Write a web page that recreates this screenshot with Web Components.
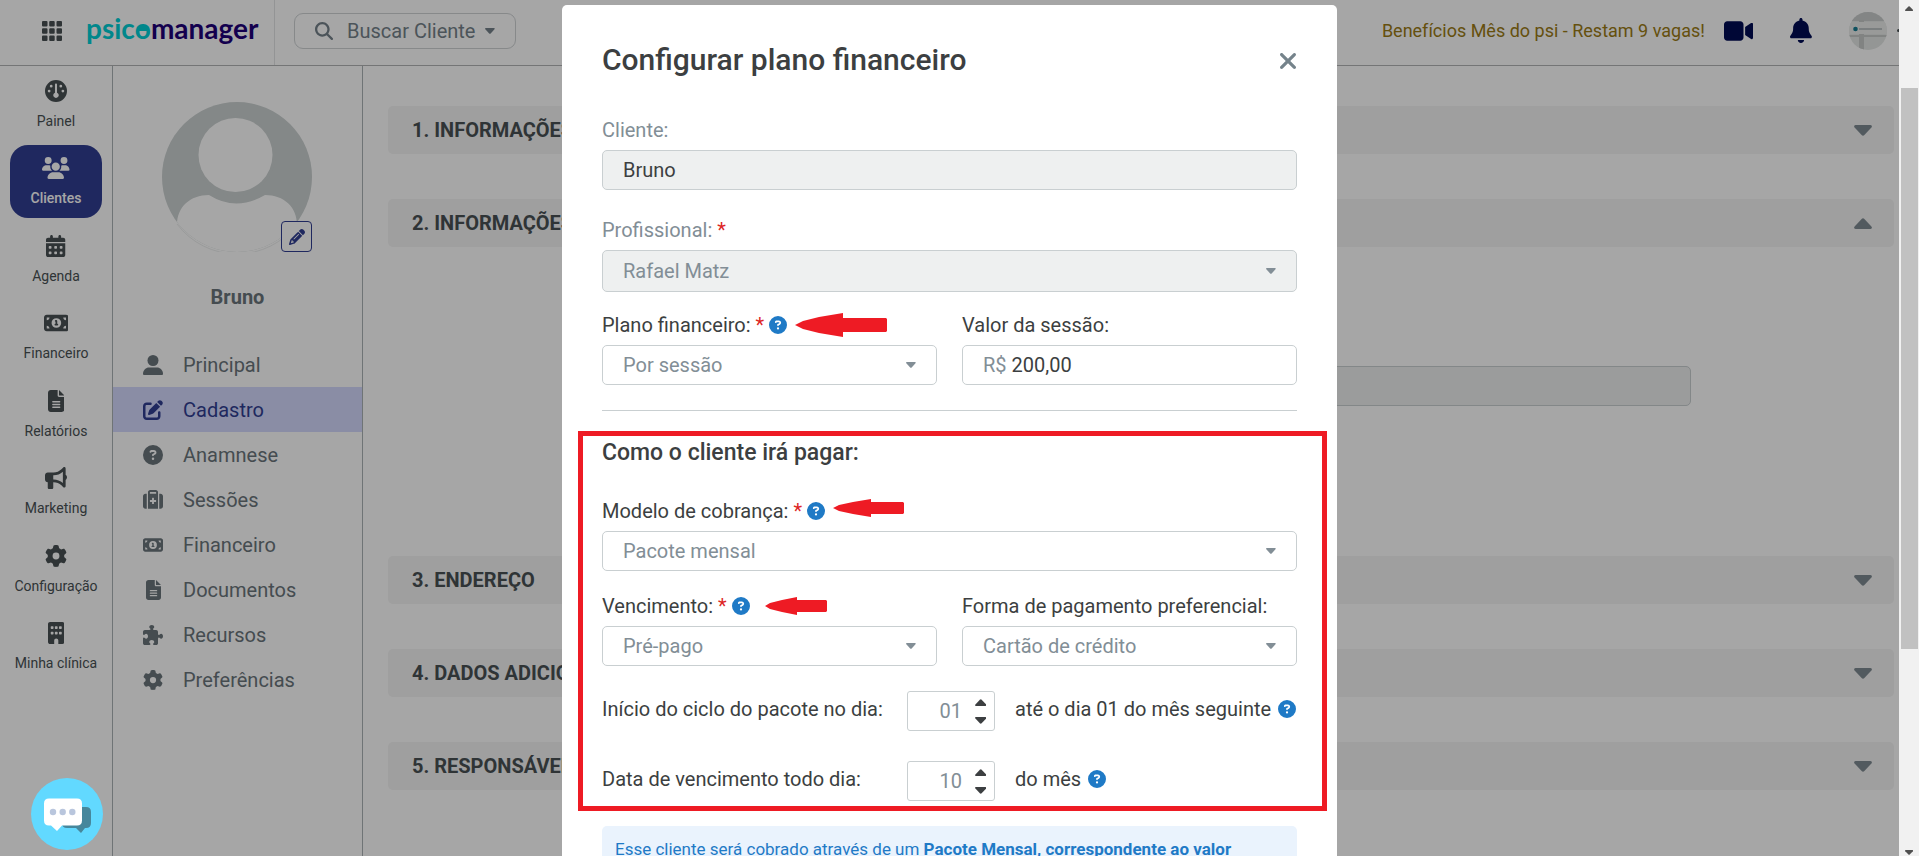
<!DOCTYPE html>
<html lang="pt-BR">
<head>
<meta charset="utf-8">
<meta name="viewport" content="width=device-width, initial-scale=1">
<title>Psicomanager - Cadastro</title>
<style>
    :root {
        --text: #3c3f41;
        --muted: #828e96;
        --menu: #6a757b;
        --dark: #495154;
        --line: #c9cfd1;
        --frame: #abb2b5;
        --primary: #313e92;
        --info: #1f7ac6;
        --danger: #ee1b24;
    }
    body {
        margin: 0;
        height: 100vh;
        overflow: hidden;
        display: flex;
        background: #fff;
        color: var(--text);
        font-family: Roboto, "Liberation Sans", sans-serif;
        font-size: 20px;
        line-height: 30px;
    }
    psi-app { flex: 1; min-width: 0; }
</style>
</head>
<body>
<psi-app>
    <psi-header slot="header"></psi-header>
    <psi-nav slot="nav">
        <psi-nav-item icon="gauge">Painel</psi-nav-item>
        <psi-nav-item icon="users" active>Clientes</psi-nav-item>
        <psi-nav-item icon="calendar">Agenda</psi-nav-item>
        <psi-nav-item icon="money">Financeiro</psi-nav-item>
        <psi-nav-item icon="file">Relatórios</psi-nav-item>
        <psi-nav-item icon="bullhorn">Marketing</psi-nav-item>
        <psi-nav-item icon="gear">Configuração</psi-nav-item>
        <psi-nav-item icon="building">Minha clínica</psi-nav-item>
    </psi-nav>
    <psi-profile slot="profile" name="Bruno">
        <psi-menu-item icon="user">Principal</psi-menu-item>
        <psi-menu-item icon="edit" active>Cadastro</psi-menu-item>
        <psi-menu-item icon="question">Anamnese</psi-menu-item>
        <psi-menu-item icon="suitcase">Sessões</psi-menu-item>
        <psi-menu-item icon="money">Financeiro</psi-menu-item>
        <psi-menu-item icon="file">Documentos</psi-menu-item>
        <psi-menu-item icon="puzzle">Recursos</psi-menu-item>
        <psi-menu-item icon="gear">Preferências</psi-menu-item>
    </psi-profile>
    <psi-panel label="1. INFORMAÇÕES"></psi-panel>
    <psi-panel label="2. INFORMAÇÕES" opened></psi-panel>
    <psi-panel label="3. ENDEREÇO"></psi-panel>
    <psi-panel label="4. DADOS ADICIONAIS"></psi-panel>
    <psi-panel label="5. RESPONSÁVEL"></psi-panel>
</psi-app>
<psi-scrollbar></psi-scrollbar>

<psi-modal label="Configurar plano financeiro">
    <psi-field type="text" label="Cliente:" value="Bruno" disabled></psi-field>
    <psi-field type="select" label="Profissional:" value="Rafael Matz" required disabled tall></psi-field>
    <psi-row>
        <psi-field type="select" label="Plano financeiro:" value="Por sessão" required help>
            <psi-arrow slot="mark" size="large"></psi-arrow>
        </psi-field>
        <psi-field type="text" label="Valor da sessão:" prefix="R$" value="200,00"></psi-field>
    </psi-row>
    <psi-section label="Como o cliente irá pagar:">
        <psi-field type="select" label="Modelo de cobrança:" value="Pacote mensal" required help>
            <psi-arrow slot="mark" size="medium"></psi-arrow>
        </psi-field>
        <psi-row>
            <psi-field type="select" label="Vencimento:" value="Pré-pago" required help>
                <psi-arrow slot="mark" size="small"></psi-arrow>
            </psi-field>
            <psi-field type="select" label="Forma de pagamento preferencial:" value="Cartão de crédito"></psi-field>
        </psi-row>
        <psi-day label="Início do ciclo do pacote no dia:" value="01">até o dia 01 do mês seguinte</psi-day>
        <psi-day label="Data de vencimento todo dia:" value="10">do mês</psi-day>
    </psi-section>
    <psi-notice>Esse cliente será cobrado através de um <b>Pacote Mensal, correspondente ao valor</b></psi-notice>
</psi-modal>
<psi-chat></psi-chat>

<script>
const ICONS = {
    gauge: ['0 0 512 512', '<path d="M256 0a256 256 0 1 0 0 512 256 256 0 1 0 0-512zM232 104c0-13 11-24 24-24s24 11 24 24v190a64 64 0 1 1-48 0zM144 112a32 32 0 1 1 0 64 32 32 0 1 1 0-64zM368 112a32 32 0 1 1 0 64 32 32 0 1 1 0-64zM96 224a32 32 0 1 1 0 64 32 32 0 1 1 0-64zM416 224a32 32 0 1 1 0 64 32 32 0 1 1 0-64z"/>'],
    users: ['0 0 640 512', '<path d="M144 0a80 80 0 1 1 0 160A80 80 0 1 1 144 0zM512 0a80 80 0 1 1 0 160A80 80 0 1 1 512 0zM0 298.7C0 239.8 47.8 192 106.7 192h42.7c15.9 0 31 3.5 44.6 9.7c-1.3 7.2-1.9 14.7-1.9 22.3c0 38.2 16.8 72.5 43.3 96H21.3C9.6 320 0 310.4 0 298.7zM405.3 320c26-23.5 42.6-57.8 42.6-96c0-7.6-.7-15-1.9-22.3c13.6-6.3 28.7-9.7 44.6-9.7h42.7C592.2 192 640 239.8 640 298.7c0 11.8-9.6 21.3-21.3 21.3H405.3zM224 224a96 96 0 1 1 192 0 96 96 0 1 1-192 0zM128 485.3C128 411.7 187.7 352 261.3 352H378.7C452.3 352 512 411.7 512 485.3c0 14.7-11.9 26.7-26.7 26.7H154.7c-14.7 0-26.7-11.9-26.7-26.7z"/>'],
    calendar: ['0 0 448 512', '<path d="M128 0c17.7 0 32 14.3 32 32V64H288V32c0-17.7 14.3-32 32-32s32 14.3 32 32V64h48c26.5 0 48 21.5 48 48v48H0V112C0 85.5 21.5 64 48 64H96V32c0-17.7 14.3-32 32-32zM0 192H448V464c0 26.5-21.5 48-48 48H48c-26.5 0-48-21.5-48-48V192zM64 272v32c0 8.8 7.2 16 16 16h32c8.8 0 16-7.2 16-16V272c0-8.8-7.2-16-16-16H80c-8.8 0-16 7.2-16 16zm128 0v32c0 8.8 7.2 16 16 16h32c8.8 0 16-7.2 16-16V272c0-8.8-7.2-16-16-16H208c-8.8 0-16 7.2-16 16zm144-16c-8.8 0-16 7.2-16 16v32c0 8.8 7.2 16 16 16h32c8.8 0 16-7.2 16-16V272c0-8.8-7.2-16-16-16H336zM64 400v32c0 8.8 7.2 16 16 16h32c8.8 0 16-7.2 16-16V400c0-8.8-7.2-16-16-16H80c-8.8 0-16 7.2-16 16zm144-16c-8.8 0-16 7.2-16 16v32c0 8.8 7.2 16 16 16h32c8.8 0 16-7.2 16-16V400c0-8.8-7.2-16-16-16H208zm112 16v32c0 8.8 7.2 16 16 16h32c8.8 0 16-7.2 16-16V400c0-8.8-7.2-16-16-16H336c-8.8 0-16 7.2-16 16z"/>'],
    money: ['0 0 576 512', '<path d="M64 64C28.7 64 0 92.7 0 128V384c0 35.3 28.7 64 64 64H512c35.3 0 64-28.7 64-64V128c0-35.3-28.7-64-64-64H64zm64 320H64V320c35.3 0 64 28.7 64 64zM64 192V128h64c0 35.3-28.7 64-64 64zM448 384c0-35.3 28.7-64 64-64v64H448zm64-192c-35.3 0-64-28.7-64-64h64v64zM176 256a112 112 0 1 1 224 0 112 112 0 1 1-224 0zm76-48c0 9.7 6.9 17.7 16 19.6V276h-4c-11 0-20 9-20 20s9 20 20 20h48c11 0 20-9 20-20s-9-20-20-20h-4V208c0-11-9-20-20-20H272c-11 0-20 9-20 20z"/>'],
    file: ['0 0 384 512', '<path d="M64 0C28.7 0 0 28.7 0 64V448c0 35.3 28.7 64 64 64H320c35.3 0 64-28.7 64-64V160H256c-17.7 0-32-14.3-32-32V0H64zM256 0V128H384L256 0zM112 256H272c8.8 0 16 7.2 16 16s-7.2 16-16 16H112c-8.8 0-16-7.2-16-16s7.2-16 16-16zm0 64H272c8.8 0 16 7.2 16 16s-7.2 16-16 16H112c-8.8 0-16-7.2-16-16s7.2-16 16-16zm0 64H272c8.8 0 16 7.2 16 16s-7.2 16-16 16H112c-8.8 0-16-7.2-16-16s7.2-16 16-16z"/>'],
    bullhorn: ['0 0 512 512', '<path d="M480 32c0-12.9-7.8-24.6-19.8-29.6s-25.7-2.2-34.9 6.9L381.7 53c-48 48-113.1 75-181 75H64c-35.3 0-64 28.7-64 64v96c0 35.3 28.7 64 64 64v128c0 17.7 14.3 32 32 32h64c17.7 0 32-14.3 32-32V352h8.7c67.9 0 133 27 181 75l43.6 43.6c9.2 9.2 22.9 11.9 34.9 6.9s19.8-16.6 19.8-29.6V300.4c18.6-8.8 32-32.5 32-60.4s-13.4-51.6-32-60.4V32zM416 108.7V371.3C357.2 317.8 280.5 288 200.7 288H192V192h8.7c79.8 0 156.5-29.8 215.3-83.3z"/>'],
    gear: ['0 0 512 512', '<path d="M495.9 166.6c3.2 8.7 .5 18.4-6.4 24.6l-43.3 39.4c1.1 8.3 1.7 16.8 1.7 25.4s-.6 17.1-1.7 25.4l43.3 39.4c6.9 6.2 9.6 15.9 6.4 24.6c-4.4 11.9-9.7 23.3-15.8 34.3l-4.7 8.1c-6.6 11-14 21.4-22.1 31.2c-5.9 7.2-15.7 9.6-24.5 6.8l-55.7-17.7c-13.4 10.3-28.2 18.9-44 25.4l-12.5 57.1c-2 9.1-9 16.3-18.2 17.8c-13.8 2.3-28 3.5-42.5 3.5s-28.7-1.2-42.5-3.5c-9.2-1.5-16.2-8.7-18.2-17.8l-12.5-57.1c-15.8-6.5-30.6-15.1-44-25.4L83.1 425.9c-8.8 2.8-18.6 .3-24.5-6.8c-8.1-9.8-15.5-20.2-22.1-31.2l-4.7-8.1c-6.1-11-11.4-22.4-15.8-34.3c-3.2-8.7-.5-18.4 6.4-24.6l43.3-39.4C64.6 273.1 64 264.6 64 256s.6-17.1 1.7-25.4L22.4 191.2c-6.9-6.2-9.6-15.9-6.4-24.6c4.4-11.9 9.7-23.3 15.8-34.3l4.7-8.1c6.6-11 14-21.4 22.1-31.2c5.9-7.2 15.7-9.6 24.5-6.8l55.7 17.7c13.4-10.3 28.2-18.9 44-25.4l12.5-57.1c2-9.1 9-16.3 18.2-17.8C227.3 1.2 241.5 0 256 0s28.7 1.2 42.5 3.5c9.2 1.5 16.2 8.7 18.2 17.8l12.5 57.1c15.8 6.5 30.6 15.1 44 25.4l55.7-17.7c8.8-2.8 18.6-.3 24.5 6.8c8.1 9.8 15.5 20.2 22.1 31.2l4.7 8.1c6.1 11 11.4 22.4 15.8 34.3zM256 336a80 80 0 1 0 0-160 80 80 0 1 0 0 160z"/>'],
    building: ['0 0 384 512', '<path d="M48 0h288c26 0 48 22 48 48v416c0 26-22 48-48 48h-96v-80c0-26-22-48-48-48s-48 22-48 48v80H48c-26 0-48-22-48-48V48C0 22 22 0 48 0zM80 96h32q16 0 16 16v32q0 16-16 16H80q-16 0-16-16v-32q0-16 16-16zM176 96h32q16 0 16 16v32q0 16-16 16h-32q-16 0-16-16v-32q0-16 16-16zM272 96h32q16 0 16 16v32q0 16-16 16h-32q-16 0-16-16v-32q0-16 16-16zM80 224h32q16 0 16 16v32q0 16-16 16H80q-16 0-16-16v-32q0-16 16-16zM176 224h32q16 0 16 16v32q0 16-16 16h-32q-16 0-16-16v-32q0-16 16-16zM272 224h32q16 0 16 16v32q0 16-16 16h-32q-16 0-16-16v-32q0-16 16-16z"/>'],
    user: ['0 0 20 20', '<circle cx="10" cy="5.5" r="5.5"/><path d="M0 19c0-4 3-6.5 6-6.5h8c3 0 6 2.5 6 6.5q0 1-1 1H1q-1 0-1-1z"/>'],
    edit: ['0 0 512 512', '<path d="M471.6 21.7c-21.9-21.9-57.3-21.9-79.2 0L362.3 51.7l97.9 97.9 30.1-30.1c21.9-21.9 21.9-57.3 0-79.2L471.6 21.7zm-299.2 220c-6.1 6.1-10.8 13.6-13.5 21.9l-29.6 88.8c-2.9 8.6-.6 18.1 5.8 24.6s15.9 8.7 24.6 5.8l88.8-29.6c8.2-2.7 15.7-7.4 21.9-13.5L437.7 172.3 339.7 74.3 172.4 241.7zM96 64C43 64 0 107 0 160V416c0 53 43 96 96 96H352c53 0 96-43 96-96V320c0-17.7-14.3-32-32-32s-32 14.3-32 32v96c0 17.7-14.3 32-32 32H96c-17.7 0-32-14.3-32-32V160c0-17.7 14.3-32 32-32h96c17.7 0 32-14.3 32-32s-14.3-32-32-32H96z"/>'],
    question: ['0 0 512 512', '<path d="M256 512A256 256 0 1 0 256 0a256 256 0 1 0 0 512zM169.8 165.3c7.9-22.3 29.1-37.3 52.8-37.3h58.3c34.9 0 63.1 28.3 63.1 63.1c0 22.6-12.1 43.5-31.7 54.8L280 264.4c-.2 13-10.9 23.6-24 23.6c-13.3 0-24-10.7-24-24V250.5c0-8.6 4.6-16.5 12.1-20.8l44.3-25.4c4.7-2.7 7.6-7.7 7.6-13.1c0-8.4-6.8-15.1-15.1-15.1H222.6c-3.4 0-6.4 2.1-7.5 5.3l-.4 1.2c-4.4 12.5-18.2 19-30.6 14.6s-19-18.2-14.6-30.6l.3-1.3zM224 352a32 32 0 1 1 64 0 32 32 0 1 1-64 0z"/>'],
    suitcase: ['0 0 512 512', '<path d="M184 0h144c31 0 56 25 56 56v424H128V56c0-31 25-56 56-56zM184 48q-8 0-8 8v40h160V56q0-8-8-8zM232 208v48h-48q-8 0-8 8v32q0 8 8 8h48v48q0 8 8 8h32q8 0 8-8v-48h48q8 0 8-8v-32q0-8-8-8h-48v-48q0-8-8-8h-32q-8 0-8 8zM64 96h32v384H64c-35 0-64-29-64-64V160c0-35 29-64 64-64zM416 96h32c35 0 64 29 64 64v256c0 35-29 64-64 64h-32z"/>'],
    puzzle: ['0 0 512 512', '<path d="M192 104.8c0-9.2-5.8-17.3-13.2-22.8C167.2 73.3 160 61.3 160 48c0-26.5 28.7-48 64-48s64 21.5 64 48c0 13.3-7.2 25.3-18.8 34c-7.4 5.5-13.2 13.6-13.2 22.8c0 12.8 10.4 23.2 23.2 23.2H336c26.5 0 48 21.5 48 48v56.8c0 12.8 10.4 23.2 23.2 23.2c9.2 0 17.3-5.8 22.8-13.2c8.7-11.6 20.7-18.8 34-18.8c26.5 0 48 28.7 48 64s-21.5 64-48 64c-13.3 0-25.3-7.2-34-18.8c-5.5-7.4-13.6-13.2-22.8-13.2c-12.8 0-23.2 10.4-23.2 23.2V464c0 26.5-21.5 48-48 48H279.2c-12.8 0-23.2-10.4-23.2-23.2c0-9.2 5.8-17.3 13.2-22.8c11.6-8.7 18.8-20.7 18.8-34c0-26.5-28.7-48-64-48s-64 21.5-64 48c0 13.3 7.2 25.3 18.8 34c7.4 5.5 13.2 13.6 13.2 22.8c0 12.8-10.4 23.2-23.2 23.2H48c-26.5 0-48-21.5-48-48V343.2C0 330.4 10.4 320 23.2 320c9.2 0 17.3 5.8 22.8 13.2C54.7 344.8 66.7 352 80 352c26.5 0 48-28.7 48-64s-21.5-64-48-64c-13.3 0-25.3 7.2-34 18.8C40.5 250.2 32.4 256 23.2 256C10.4 256 0 245.6 0 232.8V176c0-26.5 21.5-48 48-48H168.8c12.8 0 23.2-10.4 23.2-23.2z"/>'],
    pencil: ['0 0 512 512', '<path d="M410.3 231l11.3-11.3-33.9-33.9-62.1-62.1L291.7 89.8l-11.3 11.3-22.6 22.6L58.6 322.9c-10.4 10.4-18 23.3-22.2 37.4L1 480.7c-2.5 8.4-.2 17.5 6.1 23.7s15.3 8.5 23.7 6.1l120.3-35.4c14.1-4.2 27-11.8 37.4-22.2L387.7 253.7 410.3 231zM160 399.4l-9.1 22.7c-4 3.1-8.5 5.4-13.3 6.9L59.4 452l23-78.1c1.4-4.9 3.8-9.4 6.9-13.3l22.7-9.1v32c0 8.8 7.2 16 16 16h32zM362.7 18.7L314.3 67.1l129.9 129.9 48.4-48.4c25-25 25-65.5 0-90.5L453.3 18.7c-25-25-65.5-25-90.6 0zM315.3 186.7l-144 144c-6.2 6.2-16.4 6.2-22.6 0s-6.2-16.4 0-22.6l144-144c6.2-6.2 16.4-6.2 22.6 0s6.2 16.4 0 22.6z"/>'],
    search: ['0 0 512 512', '<path d="M416 208c0 45.9-14.9 88.3-40 122.7L502.6 457.4c12.5 12.5 12.5 32.8 0 45.3s-32.8 12.5-45.3 0L330.7 376c-34.4 25.2-76.8 40-122.7 40C93.1 416 0 322.9 0 208S93.1 0 208 0S416 93.1 416 208zM208 352a144 144 0 1 0 0-288 144 144 0 1 0 0 288z"/>'],
    bell: ['0 0 448 512', '<path d="M224 0c-17.7 0-32 14.3-32 32V51.2C119 66 64 130.6 64 208v18.8c0 47-17.3 92.4-48.5 127.6l-7.4 8.3c-8.4 9.4-10.4 22.9-5.3 34.4S19.4 416 32 416H416c12.6 0 24-7.4 29.2-18.9s3.1-25-5.3-34.4l-7.4-8.3C401.3 319.2 384 273.9 384 226.8V208c0-77.4-55-142-128-156.8V32c0-17.7-14.3-32-32-32zm45.3 493.3c12-12 18.7-28.3 18.7-45.3H160c0 17 6.7 33.3 18.7 45.3s28.3 18.7 45.3 18.7s33.3-6.7 45.3-18.7z"/>'],
    video: ['0 0 576 512', '<path d="M0 128C0 92.7 28.7 64 64 64H320c35.3 0 64 28.7 64 64V384c0 35.3-28.7 64-64 64H64c-35.3 0-64-28.7-64-64V128zM559.1 99.8c10.4 5.6 16.9 16.4 16.9 28.2V384c0 11.8-6.5 22.6-16.9 28.2s-23 5-32.9-1.6l-96-64L416 337.1V174.9l14.2-9.5 96-64c9.8-6.5 22.4-7.2 32.9-1.6z"/>'],
    close: ['32 96 320 320', '<path d="M342.6 150.6c12.5-12.5 12.5-32.8 0-45.3s-32.8-12.5-45.3 0L192 210.7 86.6 105.4c-12.5-12.5-32.8-12.5-45.3 0s-12.5 32.8 0 45.3L146.7 256 41.4 361.4c-12.5 12.5-12.5 32.8 0 45.3s32.8 12.5 45.3 0L192 301.3 297.4 406.6c12.5 12.5 32.8 12.5 45.3 0s12.5-32.8 0-45.3L237.3 256 342.6 150.6z"/>'],
    grid: ['0 0 20 20', '<path d="M1 0h3.5q1 0 1 1v3.5q0 1-1 1H1q-1 0-1-1V1q0-1 1-1zM8.2 0h3.5q1 0 1 1v3.5q0 1-1 1H8.2q-1 0-1-1V1q0-1 1-1zM15.5 0H19q1 0 1 1v3.5q0 1-1 1h-3.5q-1 0-1-1V1q0-1 1-1zM1 7.2h3.5q1 0 1 1v3.5q0 1-1 1H1q-1 0-1-1V8.2q0-1 1-1zM8.2 7.2h3.5q1 0 1 1v3.5q0 1-1 1H8.2q-1 0-1-1V8.2q0-1 1-1zM15.5 7.2H19q1 0 1 1v3.5q0 1-1 1h-3.5q-1 0-1-1V8.2q0-1 1-1zM1 14.5h3.5q1 0 1 1V19q0 1-1 1H1q-1 0-1-1v-3.5q0-1 1-1zM8.2 14.5h3.5q1 0 1 1V19q0 1-1 1H8.2q-1 0-1-1v-3.5q0-1 1-1zM15.5 14.5H19q1 0 1 1V19q0 1-1 1h-3.5q-1 0-1-1v-3.5q0-1 1-1z"/>'],
    down: ['0 0 18 11', '<path d="M1.5 0h15q2.3.4.9 2.5l-7 7.5q-1.4 1.4-2.8 0l-7-7.5Q-.8.4 1.5 0z"/>'],
    up: ['0 0 18 11', '<path d="M1.5 11h15q2.3-.4.9-2.5l-7-7.5q-1.4-1.4-2.8 0l-7 7.5Q-.8 10.6 1.5 11z"/>']
};

class PsiElement extends HTMLElement {
    constructor() {
        super();
        this.attachShadow({mode: 'open'});
    }

    connectedCallback() {
        this.shadowRoot.innerHTML = this.render();
    }

    attr(name) {
        return this.getAttribute(name) || '';
    }
}

class PsiIcon extends PsiElement {
    render() {
        const [box, shape] = ICONS[this.attr('name')];
        return `
            <style>
                :host { display: inline-flex; align-items: center; justify-content: center; flex: none; }
                svg { display: block; height: 1em; max-width: 100%; fill: currentColor; fill-rule: evenodd; }
            </style>
            <svg viewBox="${box}" aria-hidden="true">${shape}</svg>
        `;
    }
}

class PsiApp extends PsiElement {
    render() {
        return `
            <style>
                :host { display: flex; flex-direction: column; height: 100%; overflow: hidden; }
                .body { flex: 1; display: flex; min-height: 0; }
                main {
                    flex: 1;
                    min-width: 0;
                    display: flex;
                    flex-direction: column;
                    gap: 45px;
                    padding: 40px 5px 0 25px;
                }
            </style>
            <slot name="header"></slot>
            <div class="body">
                <slot name="nav"></slot>
                <slot name="profile"></slot>
                <main><slot></slot></main>
            </div>
        `;
    }
}

class PsiHeader extends PsiElement {
    render() {
        return `
            <style>
                :host {
                    display: flex;
                    align-items: stretch;
                    flex: none;
                    height: 65px;
                    border-bottom: 1px solid #b2b4b6;
                }
                button { background: none; border: 0; padding: 0; font: inherit; color: inherit; cursor: pointer; display: flex; align-items: center; }
                .brand {
                    box-sizing: border-box;
                    width: 275px;
                    padding: 0 0 4px 42px;
                    display: flex;
                    align-items: center;
                    gap: 24px;
                    border-right: 1px solid #e2e4e5;
                }
                .apps { font-size: 20px; color: var(--dark); }
                .logo {
                    display: flex;
                    font: 700 28px/36px Lato, sans-serif;
                    color: #1e0079;
                    text-decoration: none;
                    padding-bottom: 6px;
                }
                .logo .teal { color: #00cfd6; }
                .logo span span { position: relative; display: inline-block; }
                .logo span span::after {
                    content: "";
                    position: absolute;
                    inset: 15px 3px auto 3px;
                    height: 6px;
                    border-radius: 6px 6px 0 0;
                    background: currentColor;
                }
                .search {
                    align-self: center;
                    margin: 0 0 4px 19px;
                    height: 36px;
                    padding: 0 20px;
                    border: 1px solid #cfd3d5;
                    border-radius: 9px;
                    color: #75828a;
                }
                .search psi-icon:first-child { font-size: 18px; margin-right: 14px; }
                .search psi-icon:last-child { font-size: 6px; margin-left: 10px; }
                .tools {
                    margin-left: auto;
                    padding-bottom: 4px;
                    display: flex;
                    align-items: center;
                    color: #000c54;
                    overflow: hidden;
                }
                .tools a { font-size: 18px; color: #9b7b14; text-decoration: none; margin-right: 19px; }
                .video { font-size: 26px; margin-right: 37px; }
                .bell { font-size: 25px; margin-right: 37px; }
                .avatar svg { display: block; }
                .avatar { gap: 10px; }
                .avatar i { width: 2px; height: 3px; border-radius: 2px 0 0 2px; background: var(--dark); }
            </style>
            <div class="brand">
                <button class="apps" aria-label="Aplicativos"><psi-icon name="grid"></psi-icon></button>
                <a class="logo" href="#"><span class="teal">psic<span>o</span></span>manager</a>
            </div>
            <button class="search"><psi-icon name="search"></psi-icon>Buscar Cliente<psi-icon name="down"></psi-icon></button>
            <div class="tools">
                <a href="#">Benefícios Mês do psi - Restam 9 vagas!</a>
                <button class="video" aria-label="Vídeo"><psi-icon name="video"></psi-icon></button>
                <button class="bell" aria-label="Notificações"><psi-icon name="bell"></psi-icon></button>
                <button class="avatar" aria-label="Conta">
                    <svg width="38" height="38" viewBox="0 0 38 38">
                        <clipPath id="round"><circle cx="19" cy="19" r="19"/></clipPath>
                        <g clip-path="url(#round)">
                            <path fill="#e4e7e5" d="M0 0h38v38H0z"/>
                            <path fill="#c9cccc" d="M0 0h38v9H0z"/>
                            <path fill="#c6c9c8" d="M10 8h5v30h-5zM0 23h38v2H0z"/>
                            <path fill="#ebedec" d="M0 10h38v12H0z"/>
                            <path fill="#bcc2c3" d="M10 16h23v2H10z"/>
                            <circle cx="6.5" cy="17" r="2.3" fill="#187d92"/>
                        </g>
                    </svg>
                    <i></i>
                </button>
            </div>
        `;
    }
}

class PsiNav extends PsiElement {
    render() {
        return `
            <style>
                :host { display: block; flex: none; width: 112px; border-right: 1px solid var(--frame); }
                nav {
                    display: grid;
                    align-content: space-between;
                    min-height: 615px;
                    padding: 2px 10px 0;
                }
            </style>
            <nav><slot></slot></nav>
        `;
    }
}

class PsiNavItem extends PsiElement {
    render() {
        return `
            <style>
                :host { display: block; }
                a {
                    display: flex;
                    flex-direction: column;
                    align-items: center;
                    gap: 9px;
                    padding: 12px 0 10px;
                    border-radius: 18px;
                    color: var(--dark);
                    font-size: 14px;
                    line-height: 20px;
                    white-space: nowrap;
                    text-decoration: none;
                }
                psi-icon { font-size: 22px; }
                :host([active]) a { background: var(--primary); color: #fff; font-weight: 500; }
            </style>
            <a href="#"><psi-icon name="${this.attr('icon')}"></psi-icon><slot></slot></a>
        `;
    }
}

class PsiProfile extends PsiElement {
    render() {
        return `
            <style>
                :host { display: block; flex: none; width: 249px; border-right: 1px solid var(--frame); color: var(--menu); }
                .photo { position: relative; width: 150px; margin: 36px auto 30px 49px; }
                svg { display: block; }
                button {
                    position: absolute;
                    right: 0;
                    bottom: 0;
                    width: 31px;
                    height: 31px;
                    padding: 0;
                    display: grid;
                    place-items: center;
                    border: 1px solid var(--primary);
                    border-radius: 4px;
                    background: #fff;
                    color: var(--primary);
                    font-size: 16px;
                }
                h2 { margin: 0 0 30px; font-size: 20px; line-height: 30px; font-weight: 700; text-align: center; }
            </style>
            <div class="photo">
                <svg width="150" height="150" viewBox="0 0 150 150">
                    <clipPath id="disc"><circle cx="75" cy="75" r="75"/></clipPath>
                    <g clip-path="url(#disc)">
                        <path fill="#cbd1d1" d="M0 0h150v150H0z"/>
                        <path fill="#fff" d="M15 150v-27c0-18 13-30 32-30q27 17 56 0c19 0 32 12 32 30v27z"/>
                        <circle cx="73.5" cy="54" r="40" fill="#cbd1d1"/>
                        <circle cx="73.5" cy="53" r="37" fill="#fff"/>
                    </g>
                    <path d="M15 122a75 75 0 0 0 120 0" fill="none" stroke="#eceeee"/>
                </svg>
                <button aria-label="Editar foto"><psi-icon name="pencil"></psi-icon></button>
            </div>
            <h2>${this.attr('name')}</h2>
            <nav><slot></slot></nav>
        `;
    }
}

class PsiMenuItem extends PsiElement {
    render() {
        return `
            <style>
                :host { display: block; }
                a {
                    display: flex;
                    align-items: center;
                    gap: 20px;
                    height: 45px;
                    padding-left: 30px;
                    color: inherit;
                    text-decoration: none;
                }
                psi-icon { width: 20px; }
                :host([active]) a { background: #d4d9fe; color: var(--primary); }
            </style>
            <a href="#"><psi-icon name="${this.attr('icon')}"></psi-icon><slot></slot></a>
        `;
    }
}

class PsiPanel extends PsiElement {
    render() {
        const opened = this.hasAttribute('opened');
        return `
            <style>
                :host { display: block; }
                button {
                    width: 100%;
                    display: flex;
                    align-items: center;
                    justify-content: space-between;
                    height: 48px;
                    padding: 0 22px 0 24px;
                    border: 0;
                    border-radius: 5px;
                    background: #f4f4f4;
                    color: var(--dark);
                    font: inherit;
                    font-weight: 700;
                }
                psi-icon { font-size: 11px; color: #7f8b92; }
                .content { padding: 119px 203px 105px 0; }
                input {
                    display: block;
                    box-sizing: border-box;
                    width: 70%;
                    margin-left: auto;
                    height: 40px;
                    border: 1px solid var(--line);
                    border-radius: 5px;
                    background: #eef0f0;
                }
            </style>
            <button aria-expanded="${opened}">${this.attr('label')}<psi-icon name="${opened ? 'up' : 'down'}"></psi-icon></button>
            ${opened ? '<div class="content"><input disabled aria-label="Plano"></div>' : ''}
        `;
    }
}

class PsiScrollbar extends PsiElement {
    render() {
        return `
            <style>
                :host {
                    display: flex;
                    flex-direction: column;
                    align-items: center;
                    width: 20px;
                    background: #f1f1f1;
                    color: #505050;
                    font-size: 5px;
                }
                psi-icon { height: 17px; }
                psi-icon:last-child { height: 7px; }
                .track { flex: 1; align-self: stretch; padding: 0 1px 0 2px; display: grid; grid-template-rows: 71fr 561fr 200fr; }
                .thumb { grid-row: 2; background: #c1c1c1; }
            </style>
            <psi-icon name="up"></psi-icon>
            <div class="track"><div class="thumb"></div></div>
            <psi-icon name="down"></psi-icon>
        `;
    }
}

class PsiModal extends PsiElement {
    render() {
        return `
            <style>
                :host {
                    position: fixed;
                    inset: 0 20px 0 0;
                    display: flex;
                    justify-content: center;
                    align-items: flex-start;
                    padding-top: 5px;
                    background: rgba(0, 0, 0, 0.35);
                    overflow: hidden;
                }
                .dialog {
                    box-sizing: border-box;
                    width: min(775px, 100%);
                    padding: 35px 40px;
                    border-radius: 5px;
                    background: #fff;
                }
                header { display: flex; align-items: center; justify-content: space-between; margin-bottom: 35px; }
                h1 { margin: 0; font-size: 30px; line-height: 40px; font-weight: 500; }
                button { display: flex; padding: 2px 1px 0; border: 0; background: none; color: #75838b; font-size: 16px; cursor: pointer; }
                .form { display: flex; flex-direction: column; gap: 25px; }
            </style>
            <div class="dialog" role="dialog" aria-label="${this.attr('label')}">
                <header>
                    <h1>${this.attr('label')}</h1>
                    <button aria-label="Fechar"><psi-icon name="close"></psi-icon></button>
                </header>
                <div class="form"><slot></slot></div>
            </div>
        `;
    }

    connectedCallback() {
        super.connectedCallback();
        this.shadowRoot.querySelector('button').addEventListener('click', () => this.remove());
    }
}

class PsiRow extends PsiElement {
    render() {
        return `
            <style>
                :host { display: grid; grid-template-columns: 1fr 1fr; gap: 25px; }
            </style>
            <slot></slot>
        `;
    }
}

class PsiField extends PsiElement {
    render() {
        const value = this.attr('value');
        const disabled = this.hasAttribute('disabled') ? 'disabled' : '';
        const prefix = this.attr('prefix');
        const control = this.attr('type') === 'select'
            ? `<select id="control" ${disabled}><option>${value}</option></select><psi-icon name="down"></psi-icon>`
            : `${prefix ? `<span>${prefix}</span>` : ''}<input id="control" value="${value}" ${disabled}>`;
        return `
            <style>
                :host { display: block; min-width: 0; }
                :host([tall]) { margin-bottom: -7px; }
                .head { display: flex; align-items: center; gap: 5px; height: 30px; margin-bottom: 5px; white-space: nowrap; }
                :host([disabled]) label { color: var(--muted); }
                em { color: #dd2626; font-style: normal; }
                .help { font-size: 18px; color: var(--info); }
                .box {
                    position: relative;
                    box-sizing: border-box;
                    display: flex;
                    align-items: center;
                    gap: 5px;
                    height: 40px;
                    padding: 0 20px;
                    border: 1px solid var(--line);
                    border-radius: 5px;
                    background: #fff;
                    color: var(--muted);
                }
                :host([tall]) .box { height: 42px; }
                :host([disabled]) .box { background: #eef0f0; }
                input, select {
                    flex: 1;
                    min-width: 0;
                    height: 100%;
                    padding: 0;
                    border: 0;
                    outline: 0;
                    background: none;
                    font: inherit;
                    appearance: none;
                    opacity: 1;
                }
                input { color: var(--text); }
                select { color: var(--muted); }
                .box psi-icon { font-size: 6px; }
            </style>
            <div class="head">
                <label for="control">${this.attr('label')}</label>
                ${this.hasAttribute('required') ? '<em>*</em>' : ''}
                ${this.hasAttribute('help') ? '<psi-icon class="help" name="question"></psi-icon>' : ''}
                <slot name="mark"></slot>
            </div>
            <div class="box">${control}</div>
        `;
    }
}

class PsiSection extends PsiElement {
    render() {
        return `
            <style>
                :host { display: block; border-top: 1px solid var(--line); padding-top: 27px; }
                section { position: relative; display: flex; flex-direction: column; gap: 20px; }
                h2 { margin: 0 0 8px; font-size: 23px; line-height: 30px; font-weight: 500; }
                .outline {
                    position: absolute;
                    inset: -7px -30px -10px -24px;
                    border: 5px solid var(--danger);
                    pointer-events: none;
                }
            </style>
            <section>
                <h2>${this.attr('label')}</h2>
                <slot></slot>
                <div class="outline"></div>
            </section>
        `;
    }
}

class PsiDay extends PsiElement {
    render() {
        return `
            <style>
                :host { display: flex; align-items: center; gap: 20px; height: 40px; margin: 5px 0; }
                :host(:last-child) { margin-bottom: 0; }
                label { width: 285px; padding-bottom: 4px; white-space: nowrap; }
                .box {
                    box-sizing: border-box;
                    display: flex;
                    width: 88px;
                    height: 40px;
                    padding: 0 10px 0 20px;
                    border: 1px solid var(--line);
                    border-radius: 3px;
                }
                input {
                    width: 34px;
                    padding: 0;
                    margin-right: 13px;
                    border: 0;
                    outline: 0;
                    background: none;
                    color: var(--muted);
                    font: inherit;
                    text-align: right;
                    appearance: textfield;
                }
                input::-webkit-inner-spin-button { appearance: none; margin: 0; }
                .spin { display: flex; flex-direction: column; justify-content: center; gap: 11px; }
                button { display: flex; padding: 0; border: 0; background: none; color: var(--text); font-size: 7px; }
                .after { display: flex; align-items: center; gap: 7px; padding-bottom: 4px; white-space: nowrap; }
                .after psi-icon { font-size: 18px; color: var(--info); }
            </style>
            <label for="day">${this.attr('label')}</label>
            <div class="box">
                <input id="day" type="number" min="1" max="31" value="${this.attr('value')}">
                <div class="spin">
                    <button aria-label="Aumentar"><psi-icon name="up"></psi-icon></button>
                    <button aria-label="Diminuir"><psi-icon name="down"></psi-icon></button>
                </div>
            </div>
            <div class="after"><span><slot></slot></span><psi-icon name="question"></psi-icon></div>
        `;
    }

    connectedCallback() {
        super.connectedCallback();
        const input = this.shadowRoot.querySelector('input');
        const [up, down] = this.shadowRoot.querySelectorAll('button');
        const step = (delta) => {
            const day = Math.min(31, Math.max(1, Number(input.value) + delta));
            input.value = String(day).padStart(2, '0');
        };
        up.addEventListener('click', () => step(1));
        down.addEventListener('click', () => step(-1));
    }
}

// Red pointer drawn after a field label
class PsiArrow extends PsiElement {
    render() {
        const shapes = {
            large: [92, 24, 'M0 12L8 8l16-4L48 0v5h43l1 1v12l-1 1H48v5l-24-4-16-4z'],
            medium: [71, 18, 'M0 9l6-3 14-3L38 0v3h32l1 1v10l-1 1H38v3l-18-3-14-3z'],
            small: [62, 18, 'M0 9l5-3 12-3L32 0v3h29l1 1v10l-1 1H32v3l-15-3-12-3z']
        };
        const [w, h, d] = shapes[this.attr('size')];
        return `
            <style>
                :host { display: block; margin-left: 3px; }
                :host([size="medium"]) { margin-bottom: 6px; }
                :host([size="small"]) { margin-left: 10px; }
                svg { display: block; fill: var(--danger); }
            </style>
            <svg width="${w}" height="${h}" viewBox="0 0 ${w} ${h}" aria-hidden="true"><path d="${d}"/></svg>
        `;
    }
}

class PsiNotice extends PsiElement {
    render() {
        return `
            <style>
                :host {
                    display: block;
                    padding: 8px 13px;
                    border-radius: 5px;
                    background: #eaf3fd;
                    color: var(--info);
                    font-size: 17px;
                    line-height: 30px;
                }
            </style>
            <slot></slot>
        `;
    }
}

class PsiChat extends PsiElement {
    render() {
        return `
            <style>
                :host { position: fixed; left: 31px; bottom: 6px; }
                button { display: block; padding: 0; border: 0; border-radius: 50%; background: #62d9ff; cursor: pointer; }
                svg { display: block; }
            </style>
            <button aria-label="Abrir chat">
                <svg width="72" height="72" viewBox="0 0 72 72">
                    <path fill="#46879c" d="M36 29h19q5 0 5 5v11q0 5-5 5h-1l-4 5-5-5H36q-5 0-5-5V34q0-5 5-5z"/>
                    <path fill="#fff" d="M18 20.5h28q5 0 5 5v17q0 5-5 5H31l-5 5.5-6-5.5h-2q-5 0-5-5v-17q0-5 5-5z"/>
                    <g fill="#b9c6dd"><circle cx="22" cy="34" r="3.2"/><circle cx="31.7" cy="34" r="3.2"/><circle cx="41.3" cy="34" r="3.2"/></g>
                </svg>
            </button>
        `;
    }
}

customElements.define('psi-icon', PsiIcon);
customElements.define('psi-app', PsiApp);
customElements.define('psi-header', PsiHeader);
customElements.define('psi-nav', PsiNav);
customElements.define('psi-nav-item', PsiNavItem);
customElements.define('psi-profile', PsiProfile);
customElements.define('psi-menu-item', PsiMenuItem);
customElements.define('psi-panel', PsiPanel);
customElements.define('psi-scrollbar', PsiScrollbar);
customElements.define('psi-modal', PsiModal);
customElements.define('psi-row', PsiRow);
customElements.define('psi-field', PsiField);
customElements.define('psi-section', PsiSection);
customElements.define('psi-day', PsiDay);
customElements.define('psi-arrow', PsiArrow);
customElements.define('psi-notice', PsiNotice);
customElements.define('psi-chat', PsiChat);
</script>
</body>
</html>
